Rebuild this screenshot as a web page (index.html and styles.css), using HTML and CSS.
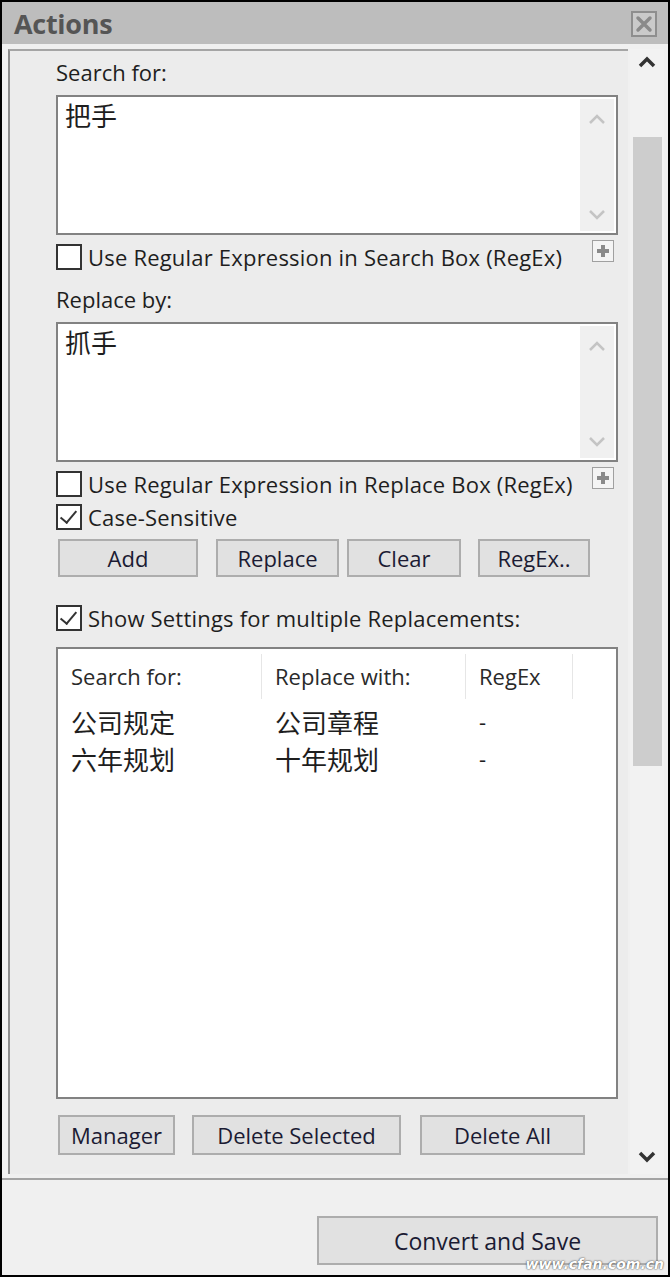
FILE: index.html
```html
<!DOCTYPE html>
<html lang="en">
<head>
  <meta charset="UTF-8">
  <title>Actions</title>
  <link rel="stylesheet" href="styles.css">
</head>
<body>

<div id="window">
  <div class="titlebar">
    <span class="title">Actions</span>
    <span class="close">
      <svg width="26" height="26" viewBox="0 0 26 26">
        <rect x="1" y="1" width="24" height="24" fill="#cacaca" stroke="#8e8e8e" stroke-width="2"/>
        <path d="M7 7 L19 19 M19 7 L7 19" stroke="#8a8a8a" stroke-width="3.5" stroke-linecap="round"/>
      </svg>
    </span>
  </div>

  <div class="main">
    <div class="panel">
      <div class="label">Search for:</div>
      <div class="textbox tall">
        <div class="value cjk">把手</div>
        <div class="boxscroll">
          <svg width="20" height="12" viewBox="0 0 20 12"><path d="M3 10 L10 3 L17 10" fill="none" stroke="#c4c4c4" stroke-width="2.5"/></svg>
          <svg width="20" height="12" viewBox="0 0 20 12"><path d="M3 2 L10 9 L17 2" fill="none" stroke="#c4c4c4" stroke-width="2.5"/></svg>
        </div>
      </div>
      <div class="checkrow first">
        <span class="check"></span>
        <span class="text">Use Regular Expression in Search Box (RegEx)</span>
        <span class="plus"></span>
      </div>

      <div class="label second">Replace by:</div>
      <div class="textbox">
        <div class="value cjk">抓手</div>
        <div class="boxscroll">
          <svg width="20" height="12" viewBox="0 0 20 12"><path d="M3 10 L10 3 L17 10" fill="none" stroke="#c4c4c4" stroke-width="2.5"/></svg>
          <svg width="20" height="12" viewBox="0 0 20 12"><path d="M3 2 L10 9 L17 2" fill="none" stroke="#c4c4c4" stroke-width="2.5"/></svg>
        </div>
      </div>
      <div class="checkrow first">
        <span class="check"></span>
        <span class="text">Use Regular Expression in Replace Box (RegEx)</span>
        <span class="plus"></span>
      </div>
      <div class="checkrow case">
        <span class="check checked"></span>
        <span class="text">Case-Sensitive</span>
      </div>

      <div class="buttons top">
        <button class="btn add">Add</button>
        <button class="btn replace">Replace</button>
        <button class="btn clear">Clear</button>
        <button class="btn regex">RegEx..</button>
      </div>

      <div class="checkrow settings">
        <span class="check checked"></span>
        <span class="text">Show Settings for multiple Replacements:</span>
      </div>

      <div class="list">
        <div class="head">
          <div class="col">Search for:</div>
          <div class="col">Replace with:</div>
          <div class="col">RegEx</div>
        </div>
        <div class="row">
          <div class="col cjk">公司规定</div>
          <div class="col cjk">公司章程</div>
          <div class="col">-</div>
        </div>
        <div class="row">
          <div class="col cjk">六年规划</div>
          <div class="col cjk">十年规划</div>
          <div class="col">-</div>
        </div>
      </div>

      <div class="buttons bottom">
        <button class="btn manager">Manager</button>
        <button class="btn delsel">Delete Selected</button>
        <button class="btn delall">Delete All</button>
      </div>
    </div>

    <div class="vscroll">
      <svg width="20" height="14" viewBox="0 0 20 14"><path d="M3 11 L10 4 L17 11" fill="none" stroke="#333" stroke-width="3.5"/></svg>
      <div class="thumb"></div>
      <svg class="down" width="20" height="14" viewBox="0 0 20 14"><path d="M3 3 L10 10 L17 3" fill="none" stroke="#333" stroke-width="3.5"/></svg>
    </div>
  </div>

  <div class="footer">
    <button class="btn convert">Convert and Save</button>
  </div>

  <span class="watermark">www.cfan.com.cn</span>
</div>

</body>
</html>
```

FILE: styles.css
```css
body {
  margin: 0;
  padding: 0;
  font-family: "Open Sans", "Noto Sans CJK SC", sans-serif;
  font-size: 22px;
  color: #1e1e1e;
}

#window {
  position: relative;
  width: 670px;
  height: 1277px;
  box-sizing: border-box;
  border: 2px solid #000;
  background-color: #f0f0f0;
  display: flex;
  flex-direction: column;
}

.cjk {
  font-family: "Noto Sans CJK SC", sans-serif;
  font-size: 26px;
}

/* title */
.titlebar {
  height: 42px;
  flex: none;
  background-color: #bdbdbd;
  display: flex;
  align-items: center;
  justify-content: space-between;
  padding: 0 11px 0 12px;
}

.titlebar .title {
  font-weight: bold;
  font-size: 27px;
  letter-spacing: -0.3px;
  color: #555;
}

.titlebar .close {
  display: flex;
  margin-top: 2px;
}

/* scroll area */
.main {
  height: 1136px;
  flex: none;
  display: flex;
  box-sizing: border-box;
  padding: 5px 0 4px 6px;
  border-bottom: 2px solid #a3a3a3;
}

.panel {
  width: 620px;
  flex: none;
  box-sizing: border-box;
  background-color: #ececec;
  border-left: 2px solid #8c8c8c;
  border-top: 2px solid #a5a5a5;
  padding: 9px 10px 0 46px;
}

.vscroll {
  width: 34px;
  margin-left: 2px;
  background-color: #f2f2f2;
  display: flex;
  flex-direction: column;
  align-items: center;
  padding-top: 6px;
  box-sizing: border-box;
}

.vscroll .thumb {
  width: 29px;
  height: 629px;
  margin-top: 68px;
  background-color: #cdcdcd;
}

.vscroll .down {
  margin-top: auto;
  margin-bottom: 10px;
}

.label {
  height: 24px;
  line-height: 24px;
  margin-bottom: 11px;
}

.label.second {
  margin-top: 17px;
}

/* text boxes */
.textbox {
  height: 136px;
  border: 2px solid #828282;
  background-color: #fff;
  display: flex;
  justify-content: space-between;
}

.textbox .value {
  padding: 2px 0 0 7px;
  line-height: 32px;
}

.textbox .boxscroll {
  width: 34px;
  margin: 2px 2px 2px 0;
  background-color: #f0f0f0;
  display: flex;
  flex-direction: column;
  justify-content: space-between;
  align-items: center;
  padding: 14px 0 10px;
}

/* check boxes */
.checkrow {
  display: flex;
  align-items: center;
  height: 26px;
  position: relative;
}

.checkrow.first {
  margin-top: 9px;
}

.checkrow.case {
  margin-top: 7px;
}

.checkrow.settings {
  margin-top: 28px;
}

.check {
  width: 22px;
  height: 22px;
  border: 2px solid #333;
  background-color: #fff;
  flex: none;
  position: relative;
}

.check.checked::after {
  content: "";
  position: absolute;
  left: 6px;
  top: 1px;
  width: 7px;
  height: 14px;
  border: solid #333;
  border-width: 0 2px 2px 0;
  transform: rotate(40deg);
}

.checkrow .text {
  margin-left: 6px;
  white-space: nowrap;
  letter-spacing: 0.2px;
}

.plus {
  width: 20px;
  height: 20px;
  border: 1px solid #a0a0a0;
  background-color: #f4f4f4;
  margin-left: auto;
  margin-right: 4px;
  align-self: flex-start;
  margin-top: -4px;
  position: relative;
}

.plus::before,
.plus::after {
  content: "";
  position: absolute;
  background-color: #8a8a8a;
}

.plus::before {
  left: 4px;
  top: 8px;
  width: 12px;
  height: 4px;
}

.plus::after {
  left: 8px;
  top: 4px;
  width: 4px;
  height: 12px;
}

/* buttons */
.buttons {
  display: flex;
}

.buttons.top {
  margin-top: 9px;
  padding-left: 2px;
}

.buttons.bottom {
  margin-top: 16px;
  padding-left: 2px;
}

.btn {
  font-family: "Open Sans", sans-serif;
  font-size: 22px;
  color: #1b1b33;
  background-color: #e1e1e1;
  border: 2px solid #adadad;
  height: 38px;
  padding: 0;
}

.buttons.bottom .btn {
  height: 40px;
}

.btn.add { width: 140px; }
.btn.replace { width: 123px; margin-left: 18px; }
.btn.clear { width: 114px; margin-left: 8px; }
.btn.regex { width: 112px; margin-left: 17px; }
.btn.manager { width: 117px; }
.btn.delsel { width: 209px; margin-left: 17px; }
.btn.delall { width: 165px; margin-left: 19px; }

/* replacement list */
.list {
  height: 452px;
  margin-top: 16px;
  box-sizing: border-box;
  border: 2px solid #828282;
  background-color: #fff;
}

.list .head,
.list .row {
  display: grid;
  grid-template-columns: 204px 204px 107px;
}

.list .head {
  padding-top: 5px;
  height: 45px;
}

.list .head .col {
  border-right: 1px solid #e6e6e6;
  line-height: 45px;
  color: #2a2a2a;
}

.list .col {
  padding-left: 13px;
}

.list .row {
  height: 37px;
  line-height: 37px;
}

.list .head + .row {
  margin-top: 4px;
}

/* footer */
.footer {
  flex: 1;
  display: flex;
  justify-content: flex-end;
  padding: 36px 10px 0 0;
}

.btn.convert {
  width: 341px;
  height: 49px;
  font-size: 23px;
}

.watermark {
  position: absolute;
  right: 4px;
  bottom: 3px;
  font-family: "DejaVu Sans", sans-serif;
  font-style: italic;
  font-weight: bold;
  font-size: 14px;
  color: #fff;
  text-shadow: 0 0 2px #555, 0 0 1px #555;
}
```
